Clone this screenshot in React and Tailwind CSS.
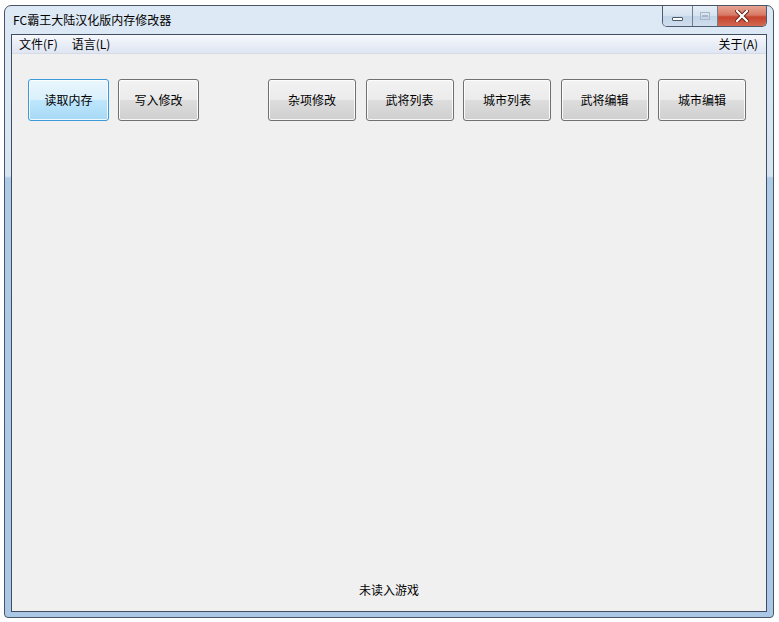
const FONT = { fontFamily: '"Microsoft YaHei", "Noto Sans CJK SC", "Liberation Sans", sans-serif' }

const LEFT_BUTTONS = ['读取内存', '写入修改']
const RIGHT_BUTTONS = ['杂项修改', '武将列表', '城市列表', '武将编辑', '城市编辑']

function WinButton({ label, focused, wide }) {
  const base = 'h-[42px] rounded-[3px] border text-[12px] text-black flex items-center justify-center shadow-[inset_0_0_0_1px_rgba(255,255,255,0.85)]'
  const look = focused
    ? 'border-[#3c9bd6] bg-[linear-gradient(to_bottom,#eaf6fd_0%,#d9f0fc_50%,#bee6fd_51%,#a7d9f5_100%)]'
    : 'border-[#707070] bg-[linear-gradient(to_bottom,#f2f2f2_0%,#ebebeb_50%,#dddddd_51%,#cfcfcf_100%)]'
  return (
    <button className={`${base} ${look} ${wide ? 'w-[88px]' : 'w-[81px]'}`}>
      {label}
    </button>
  )
}

function CaptionButtons() {
  return (
    <div className="absolute top-[0px] right-[6px] flex h-[21px] rounded-b-[5px] border border-t-0 border-[#4c5b6d] overflow-hidden">
      <div className="w-[30px] flex items-center justify-center bg-[linear-gradient(to_bottom,#e6eef7_0%,#d5e2f0_50%,#c2d4e8_51%,#d0deee_100%)] border-r border-[#6f7f92]">
        <div className="w-[11px] h-[4px] mt-[5px] bg-white border border-[#4a5a6c] rounded-[1px]" />
      </div>
      <div className="w-[25px] flex items-center justify-center bg-[linear-gradient(to_bottom,#e6eef7_0%,#d5e2f0_50%,#c2d4e8_51%,#d0deee_100%)] border-r border-[#6f7f92]">
        <div className="w-[10px] h-[8px] border border-[#a9b6c5] flex items-center justify-center">
          <div className="w-[6px] h-[2px] border border-[#a9b6c5]" />
        </div>
      </div>
      <div className="w-[48px] flex items-center justify-center bg-[linear-gradient(to_bottom,#e8a493_0%,#d77a66_45%,#c7432e_55%,#d1684f_100%)]">
        <svg width="14" height="12" viewBox="0 0 14 12">
          <path d="M2 1 L12 11 M12 1 L2 11" stroke="#5a1f16" strokeWidth="4" strokeLinecap="square" />
          <path d="M2 1 L12 11 M12 1 L2 11" stroke="#ffffff" strokeWidth="2.2" strokeLinecap="square" />
        </svg>
      </div>
    </div>
  )
}

export default function App() {
  return (
    <div className="w-[779px] h-[622px] bg-white pt-[5px] pl-[4px]" style={FONT}>
      <div className="relative w-[770px] h-[613px] flex flex-col rounded-t-[7px] rounded-b-[4px] border border-[#4a5565] px-[6px] pb-[5px] bg-[linear-gradient(to_bottom,#dde9f5_0px,#d7e5f3_170px,#aecbe8_172px,#aac8e6_100%)]">
        <CaptionButtons />

        {/* title bar */}
        <div className="h-[28px] flex items-center pl-[2px] text-[12px] text-black">
          FC霸王大陆汉化版内存修改器
        </div>

        {/* client area */}
        <div className="flex-1 flex flex-col border border-[#3f4e60] bg-[#f0f0f0]">
          <div className="h-[19px] flex items-center text-[12px] text-black border-b border-[#d5dce8] bg-[linear-gradient(to_bottom,#f6f8fc_0%,#e9eef7_50%,#dfe6f2_100%)]">
            <span className="ml-[6px] px-[1px]">文件(F)</span>
            <span className="ml-[12px] px-[1px]">语言(L)</span>
            <span className="ml-auto mr-[8px]">关于(A)</span>
          </div>

          <div className="flex pt-[25px] pl-[16px]">
            <div className="flex gap-[9px]">
              {LEFT_BUTTONS.map((b, i) => (
                <WinButton key={b} label={b} focused={i === 0} />
              ))}
            </div>
            <div className="flex gap-[9.5px] ml-[69px]">
              {RIGHT_BUTTONS.map(b => (
                <WinButton key={b} label={b} wide />
              ))}
            </div>
          </div>

          <div className="mt-auto mb-[12px] text-center text-[12px] text-black">
            未读入游戏
          </div>
        </div>
      </div>
    </div>
  )
}
